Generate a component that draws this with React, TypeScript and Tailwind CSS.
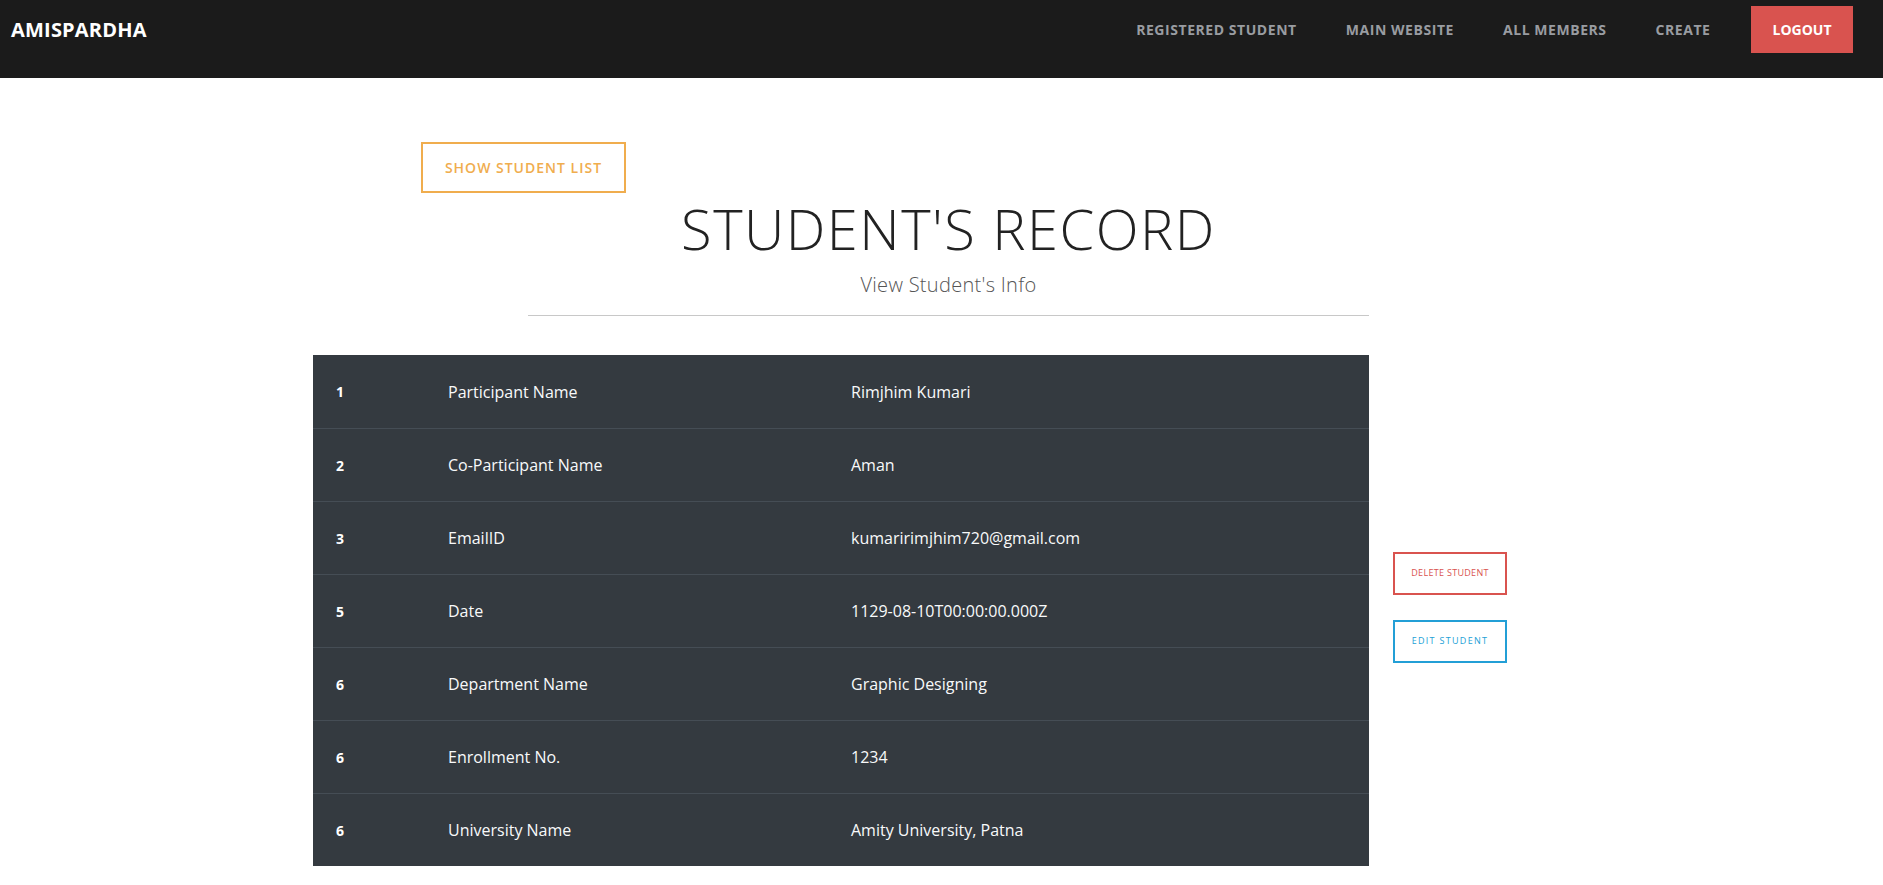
const navLinks = ['REGISTERED STUDENT', 'MAIN WEBSITE', 'ALL MEMBERS', 'CREATE'];

const records = [
  { no: '1', label: 'Participant Name', value: 'Rimjhim Kumari' },
  { no: '2', label: 'Co-Participant Name', value: 'Aman' },
  { no: '3', label: 'EmailID', value: 'kumaririmjhim720@gmail.com' },
  { no: '5', label: 'Date', value: '1129-08-10T00:00:00.000Z' },
  { no: '6', label: 'Department Name', value: 'Graphic Designing' },
  { no: '6', label: 'Enrollment No.', value: '1234' },
  { no: '6', label: 'University Name', value: 'Amity University, Patna' },
];

const Navbar = () => (
  <nav className="h-[78px] bg-[#1b1b1b] flex items-start pt-[6px] pl-[11px] pr-[30px]">
    <a className="h-[47px] flex items-center text-[20px] font-bold tracking-[0.2px] text-white">AMISPARDHA</a>
    <div className="ml-auto flex items-center h-[47px]">
      {navLinks.map((link) => (
        <a key={link} className="px-[24.5px] text-[14px] font-bold tracking-[0.55px] text-[#999ca1]">
          {link}
        </a>
      ))}
      <button className="ml-[16px] w-[102px] h-[47px] bg-[#d9534f] text-white text-[14px] font-bold">
        LOGOUT
      </button>
    </div>
  </nav>
);

const RecordTable = () => (
  <div className="w-[1056px] bg-[#343a40] text-[#f8f9fa]">
    {records.map((r, i) => (
      <div
        key={i}
        className={`grid grid-cols-[111px_404px_1fr] items-center h-[73px] ${i > 0 ? 'border-t border-[#454d55]' : ''}`}
      >
        <div className="pl-[23px] text-[14px] font-bold text-white">{r.no}</div>
        <div className="pl-[24px] text-[16px]">{r.label}</div>
        <div className="pl-[23px] text-[16px]">{r.value}</div>
      </div>
    ))}
  </div>
);

export default function App() {
  return (
    <div className="min-h-screen bg-white font-['Open_Sans',sans-serif]">
      <Navbar />
      <main className="pt-[64px] pb-[18px]">
        <div className="ml-[313px]">
          <div className="pl-[108px]">
            <button className="w-[205px] h-[51px] border-2 border-[#f0ad4e] text-[#f0ad4e] text-[14px] font-semibold tracking-[1px]">
              SHOW STUDENT LIST
            </button>
          </div>

          <div className="ml-[215px] w-[841px] text-center mt-[2px]">
            <h1 className="text-[56px] leading-[67px] font-light tracking-[1.5px] text-[#222222]">STUDENT'S RECORD</h1>
            <p className="mt-[9px] text-[20px] leading-[28px] font-light tracking-[0.3px] text-[#555555]">View Student's Info</p>
            <hr className="mt-[16px] border-0 border-t border-[#c8c8c8]" />
          </div>

          <div className="flex items-center mt-[39px]">
            <RecordTable />
            <div className="ml-[24px] mb-[7px] flex flex-col gap-[25px]">
              <button className="w-[114px] h-[43px] border-2 border-[#d9534f] text-[#d9534f] text-[9px] tracking-[0.3px]">
                DELETE STUDENT
              </button>
              <button className="w-[114px] h-[43px] border-2 border-[#239fd6] text-[#239fd6] text-[9px] tracking-[1.3px]">
                EDIT STUDENT
              </button>
            </div>
          </div>
        </div>
      </main>
    </div>
  );
}
